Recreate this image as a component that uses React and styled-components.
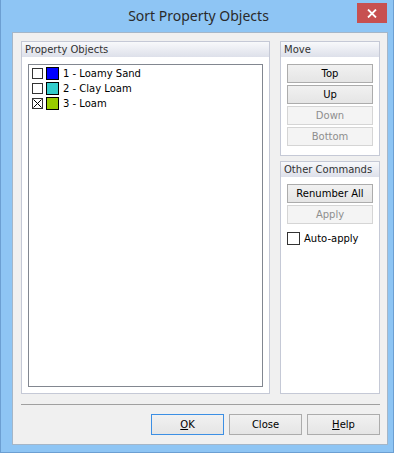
import React from "react";
import styled, { createGlobalStyle } from "styled-components";

const Global = createGlobalStyle`
  html, body { margin: 0; padding: 0; background: #ffffff; }
  body { font-family: "DejaVu Sans", Tahoma, sans-serif; }
  * { box-sizing: border-box; }
`;

const Window = styled.div`
  width: 394px;
  height: 453px;
  background: #8ec5f4;
  border: 1px solid #6c9fd2;
  border-top: none;
  display: flex;
  flex-direction: column;
`;

const TitleBar = styled.div`
  height: 32px;
  display: grid;
  grid-template-columns: 1fr auto 1fr;
  align-items: start;
`;

const Title = styled.div`
  grid-column: 2;
  font-family: "Noto Sans", "Open Sans", sans-serif;
  font-size: 14px;
  color: #2a2a2a;
  line-height: 20px;
  padding-top: 6px;
  padding-left: 3px;
`;

const CloseBtn = styled.div`
  grid-column: 3;
  justify-self: end;
  margin-top: 3px;
  margin-right: 6px;
  width: 30px;
  height: 20px;
  background: #c75050;
  display: flex;
  align-items: center;
  justify-content: center;
`;

const Content = styled.div`
  margin: 0 5px 7px 11px;
  flex: 1;
  background: #f0f0f0;
  border: 1px solid #a4b6c8;
  padding: 8px 7px 9px 8px;
  display: flex;
  flex-direction: column;
`;

const MainRow = styled.div`
  display: flex;
  gap: 10px;
  height: 353px;
`;

const Group = styled.div`
  border: 1px solid #c5c9d6;
  background: #ffffff;
  display: flex;
  flex-direction: column;
  width: ${(p) => p.$w || "auto"};
  height: ${(p) => p.$h || "auto"};
  flex: ${(p) => (p.$grow ? 1 : "none")};
`;

const GroupHeader = styled.div`
  height: 15px;
  background: linear-gradient(#f8f9fb, #dde0ea);
  font-size: 10px;
  line-height: 15px;
  color: #333;
  padding-left: 3px;
  white-space: nowrap;
`;

const GroupBody = styled.div`
  flex: 1;
  display: flex;
  flex-direction: column;
  padding: ${(p) => p.$pad};
`;

const SideColumn = styled.div`
  width: 100px;
  display: flex;
  flex-direction: column;
  gap: 5px;
`;

const ListBox = styled.div`
  flex: 1;
  border: 1px solid #828790;
  background: #fff;
  padding-top: 1px;
`;

const Row = styled.div`
  height: 15px;
  display: flex;
  align-items: center;
  padding-left: 3px;
  font-size: 10px;
  color: #000;
  white-space: nowrap;
`;

const Check = styled.div`
  width: ${(p) => p.$size}px;
  height: ${(p) => p.$size}px;
  border: 1px solid #333;
  background: #fff;
  flex: none;
  display: flex;
`;

const Swatch = styled.div`
  width: 13px;
  height: 13px;
  border: 1px solid #000;
  background: ${(p) => p.$c};
  margin-left: 3px;
  margin-right: 4px;
  flex: none;
`;

const Button = styled.div`
  height: ${(p) => p.$h || 19}px;
  width: ${(p) => (p.$w ? p.$w + "px" : "auto")};
  border: 1px solid ${(p) => (p.$default ? "#3c8fe4" : p.$disabled ? "#d5d5d5" : "#acacac")};
  background: ${(p) =>
    p.$disabled ? "#f4f4f4" : "linear-gradient(#f1f1f1, #e5e5e5)"};
  color: ${(p) => (p.$disabled ? "#8e8e8e" : "#000")};
  font-size: 10px;
  display: flex;
  align-items: center;
  justify-content: center;
  flex: none;
`;

const ButtonStack = styled.div`
  display: flex;
  flex-direction: column;
  gap: 2px;
`;

const CheckRow = styled.div`
  display: flex;
  align-items: center;
  gap: 4px;
  margin-top: 8px;
  font-size: 10px;
  color: #000;
`;

const Separator = styled.div`
  height: 1px;
  background: #a0a0a0;
  margin-top: 10px;
`;

const ButtonRow = styled.div`
  display: flex;
  justify-content: flex-end;
  gap: 5px;
  margin-top: 9px;
`;

const U = styled.span`
  text-decoration: underline;
`;

const items = [
  { n: "1 - Loamy Sand", c: "#0000ff", checked: false },
  { n: "2 - Clay Loam", c: "#33cccc", checked: false },
  { n: "3 - Loam", c: "#99cc00", checked: true },
];

export default function App() {
  return (
    <>
      <Global />
      <Window>
        <TitleBar>
          <Title>Sort Property Objects</Title>
          <CloseBtn>
            <svg width="10" height="9" viewBox="0 0 10 9">
              <path d="M1 0.5 L9 8.5 M9 0.5 L1 8.5" stroke="#fff" strokeWidth="1.8" />
            </svg>
          </CloseBtn>
        </TitleBar>
        <Content>
          <MainRow>
            <Group $w="249px">
              <GroupHeader>Property Objects</GroupHeader>
              <GroupBody $pad="7px 6px 6px 6px">
                <ListBox>
                  {items.map((it) => (
                    <Row key={it.n}>
                      <Check $size={11}>
                        {it.checked && (
                          <svg width="9" height="9" viewBox="0 0 9 9">
                            <path d="M0.5 0.5 L8.5 8.5 M8.5 0.5 L0.5 8.5" stroke="#000" strokeWidth="1" />
                          </svg>
                        )}
                      </Check>
                      <Swatch $c={it.c} />
                      {it.n}
                    </Row>
                  ))}
                </ListBox>
              </GroupBody>
            </Group>
            <SideColumn>
              <Group $h="115px">
                <GroupHeader>Move</GroupHeader>
                <GroupBody $pad="7px 6px 9px 6px">
                  <ButtonStack>
                    <Button>Top</Button>
                    <Button>Up</Button>
                    <Button $disabled>Down</Button>
                    <Button $disabled>Bottom</Button>
                  </ButtonStack>
                </GroupBody>
              </Group>
              <Group $grow>
                <GroupHeader>Other Commands</GroupHeader>
                <GroupBody $pad="7px 6px 9px 6px">
                  <ButtonStack>
                    <Button>Renumber All</Button>
                    <Button $disabled>Apply</Button>
                  </ButtonStack>
                  <CheckRow>
                    <Check $size={13} />
                    Auto-apply
                  </CheckRow>
                </GroupBody>
              </Group>
            </SideColumn>
          </MainRow>
          <Separator />
          <ButtonRow>
            <Button $w={73} $h={21} $default>
              <U>O</U>K
            </Button>
            <Button $w={73} $h={21}>Close</Button>
            <Button $w={73} $h={21}>
              <U>H</U>elp
            </Button>
          </ButtonRow>
        </Content>
      </Window>
    </>
  );
}
